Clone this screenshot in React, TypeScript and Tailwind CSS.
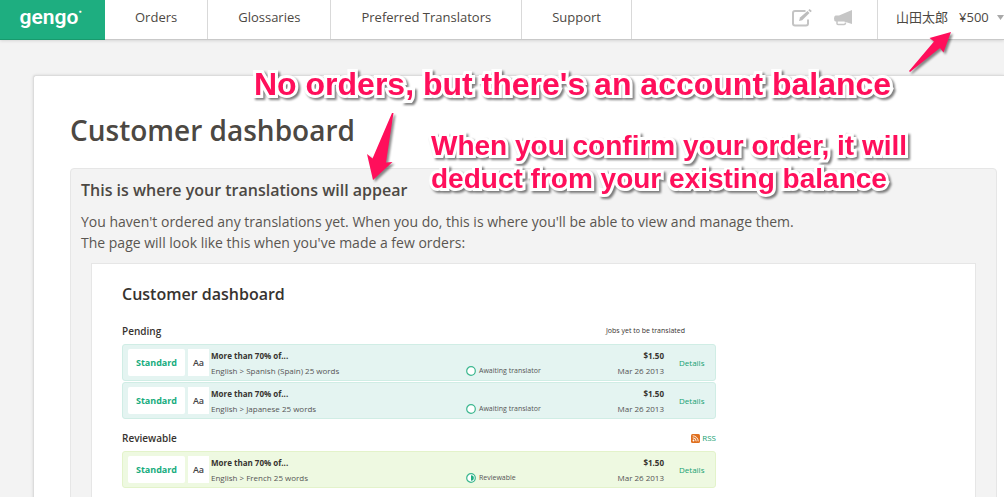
import type { ReactNode } from 'react';

type Job = {
  id: number;
  target: string;
  status: string;
};

const navItems = ['Orders', 'Glossaries', 'Preferred Translators', 'Support'];

const pendingJobs: Job[] = [
  { id: 1, target: 'Spanish (Spain)', status: 'Awaiting translator' },
  { id: 2, target: 'Japanese', status: 'Awaiting translator' },
];

const reviewableJobs: Job[] = [{ id: 3, target: 'French', status: 'Reviewable' }];

function EditIcon() {
  return (
    <svg width="20" height="18" viewBox="0 0 20 18" fill="none" aria-hidden="true">
      <path d="M13.500 2H3Q1 2 1 4V14.500Q1 16.500 3 16.500H14Q16 16.500 16 14.500V10.500" stroke="#c4c4c4" strokeWidth="2" />
      <path d="M7 12L8 8.500L15.500 2L17.500 4L10.200 11.200Z" fill="#bdbdbd" />
      <path d="M16.300 1.200L17.600 0L19.800 2L18.500 3.200Z" fill="#bdbdbd" />
    </svg>
  );
}

function MegaphoneIcon() {
  return (
    <svg width="18" height="16" viewBox="0 0 18 16" fill="none" aria-hidden="true">
      <path d="M18 0V14L10 11.500H1.500Q0 11 0 8.500Q0 6 1.500 5.500H5Z" fill="#c6c6c6" />
      <path d="M3 11V13.500Q3 14.500 4 14.500H10Q11.500 14.500 11.500 12.500" stroke="#c6c6c6" strokeWidth="1.500" />
    </svg>
  );
}

function StatusIcon({ half }: { half: boolean }) {
  return (
    <svg width="10" height="10" viewBox="0 0 10 10" className="shrink-0" aria-hidden="true">
      <circle cx="5" cy="5" r="4.300" fill="#fff" stroke="#3cb78f" strokeWidth="1.200" />
      {half && <path d="M5 2.200A2.800 2.800 0 0 1 5 7.800Z" fill="#1eae80" />}
    </svg>
  );
}

function RssIcon() {
  return (
    <svg width="9" height="9" viewBox="0 0 9 9" fill="none" aria-hidden="true">
      <rect width="9" height="9" rx="1.500" fill="#e0701f" />
      <circle cx="2.500" cy="6.500" r="0.900" fill="#fff" />
      <path d="M1.700 3.800A3.500 3.500 0 0 1 5.200 7.300M1.700 1.800A5.500 5.500 0 0 1 7.200 7.300" stroke="#fff" strokeWidth="0.900" />
    </svg>
  );
}

function JobRow({ job, reviewable }: { job: Job; reviewable?: boolean }) {
  return (
    <li
      className={`flex h-[37px] items-center rounded-[3px] border pl-[5px] pr-[10px] text-[8px] leading-[15px] ${
        reviewable ? 'border-[#e3f3ca] bg-[#eef9e1]' : 'border-[#d0ede5] bg-[#e4f4f1]'
      }`}
    >
      <span className="flex h-[27px] w-[57px] items-center justify-center rounded-[2px] bg-white text-[9px] font-bold text-[#17ac7d]">
        Standard
      </span>
      <span className="ml-[3px] flex h-[27px] w-[21px] items-center justify-center bg-white text-[9px] font-semibold text-[#444]">
        Aa
      </span>
      <div className="ml-[2px] flex-1">
        <p className="font-bold text-[#37332f]">More than 70% of...</p>
        <p className="text-[#555]">English &gt; {job.target} 25 words</p>
      </div>
      <div className="flex w-[100px] items-center gap-[3px] self-end pb-[2px] text-[7px] text-[#555]">
        <StatusIcon half={!!reviewable} />
        {job.status}
      </div>
      <div className="w-[98px] text-right">
        <p className="font-bold text-[#37332f]">$1.50</p>
        <p className="text-[#555]">Mar 26 2013</p>
      </div>
      <a href="#" className="ml-[15px] w-[26px] font-medium text-[#17a172]">
        Details
      </a>
    </li>
  );
}

function Callout({ className, children }: { className: string; children: ReactNode }) {
  return (
    <p
      className={`absolute whitespace-nowrap font-['Liberation_Sans',Arial,sans-serif] font-bold text-[#ff0f5b] [-webkit-text-stroke:6px_white] [paint-order:stroke_fill] [stroke-linejoin:round] drop-shadow-[2px_2px_1px_rgba(0,0,0,0.5)] ${className}`}
    >
      {children}
    </p>
  );
}

export default function App() {
  return (
    <div className="relative h-screen overflow-hidden bg-[#f3f3f3] font-['Open_Sans',sans-serif] text-[#4c4843]">
      <header className="flex h-10 border-b border-[#c9c9c9] bg-white shadow-[0_1px_3px_rgba(0,0,0,0.12)]">
        <a href="#" className="flex h-10 w-[105px] shrink-0 justify-center border-b border-[#189a6d] bg-[#1eae80] pr-1 text-white">
          <span className="font-['Roboto',sans-serif] text-[21px] leading-[34px] font-semibold">gengo</span>
          <span className="pt-[9px] text-[5px] leading-[5px]">●</span>
        </a>
        <nav className="flex text-[13px]">
          {navItems.map((item) => (
            <a key={item} href="#" className="flex items-center border-r border-[#d9d9d9] px-[30px] pb-1 whitespace-nowrap">
              {item}
            </a>
          ))}
        </nav>
        <div className="ml-auto flex items-center gap-[22px] pr-[25px] pb-1">
          <button type="button" aria-label="New order">
            <EditIcon />
          </button>
          <button type="button" aria-label="Announcements">
            <MegaphoneIcon />
          </button>
        </div>
        <button type="button" className="flex w-[127px] shrink-0 items-center border-l border-[#d9d9d9] pb-1 pl-[18px] text-[13px] whitespace-nowrap">
          <span className="font-['Open_Sans','Noto_Sans_CJK_JP',sans-serif]">山田太郎</span>
          <span className="ml-[11px]">¥500</span>
          <svg width="7" height="5" viewBox="0 0 7 5" className="ml-2 shrink-0" aria-hidden="true">
            <path d="M0 0H7L3.500 5Z" fill="#a9a9a9" />
          </svg>
        </button>
      </header>

      <main className="mt-[35px] ml-[33px] rounded-tl-[3px] border-t border-l border-[#dcdcdc] bg-white pt-[34px] pr-[7px] pl-9 shadow-[0_0_3px_rgba(0,0,0,0.12)]">
        <h1 className="text-[28px] leading-[40px] font-semibold">Customer dashboard</h1>

        <section className="mt-[18px] rounded-[4px] border border-[#e6e6e6] bg-[#f3f3f3] px-[10px] pt-[10px]">
          <h2 className="text-[16px] leading-[22px] font-semibold">This is where your translations will appear</h2>
          <p className="mt-[10px] text-[14px] leading-[21px] text-[#5a5651]">
            You haven't ordered any translations yet. When you do, this is where you'll be able to view and manage them.
            <br />
            The page will look like this when you've made a few orders:
          </p>

          <div className="mx-[10px] mt-[10px] border border-[#e6e6e6] bg-white px-[30px] pt-[19px] pb-10">
            <h3 className="text-[16px] leading-[22px] font-semibold text-[#37332f]">Customer dashboard</h3>

            <div className="max-w-[594px]">
              <div className="mt-[19px] flex h-[14px] items-center justify-between pr-[31px]">
                <h4 className="text-[10px] font-semibold text-[#37332f]">Pending</h4>
                <span className="text-[7px] text-[#37332f]">Jobs yet to be translated</span>
              </div>
              <ul className="mt-[6px] flex flex-col gap-px">
                {pendingJobs.map((job) => (
                  <JobRow key={job.id} job={job} />
                ))}
              </ul>

              <div className="mt-3 flex h-[14px] items-center justify-between">
                <h4 className="text-[10px] font-semibold text-[#37332f]">Reviewable</h4>
                <a href="#" className="flex items-center gap-[2px] text-[8px] font-medium text-[#17a172]">
                  <RssIcon />
                  RSS
                </a>
              </div>
              <ul className="mt-[6px]">
                {reviewableJobs.map((job) => (
                  <JobRow key={job.id} job={job} reviewable />
                ))}
              </ul>
            </div>
          </div>
        </section>
      </main>

      {/* Pink notes laid over the page */}
      <Callout className="top-[66px] left-[254px] text-[32px] leading-[36px]">
        No orders, but there's an account balance
      </Callout>
      <Callout className="top-[129px] left-[431px] text-[28px] leading-[33px]">
        When you confirm your order, it will
        <br />
        deduct from your existing balance
      </Callout>
      <svg width="50" height="46" viewBox="0 0 50 46" className="absolute top-[30px] left-[906px] drop-shadow-[2px_2px_1px_rgba(0,0,0,0.45)]" aria-hidden="true">
        <path d="M45 2L37.500 22.500L34 18L4 42L3 41L28 11.500L23.500 8Z" fill="#ff0f5b" />
      </svg>
      <svg width="36" height="76" viewBox="0 0 36 76" className="absolute top-[110px] left-[364px] drop-shadow-[2px_2px_1px_rgba(0,0,0,0.45)]" aria-hidden="true">
        <path d="M28 3H29.500L22 52.500L28.500 52L9 70L3 44L8.500 48.500Z" fill="#ff0f5b" />
      </svg>
    </div>
  );
}
